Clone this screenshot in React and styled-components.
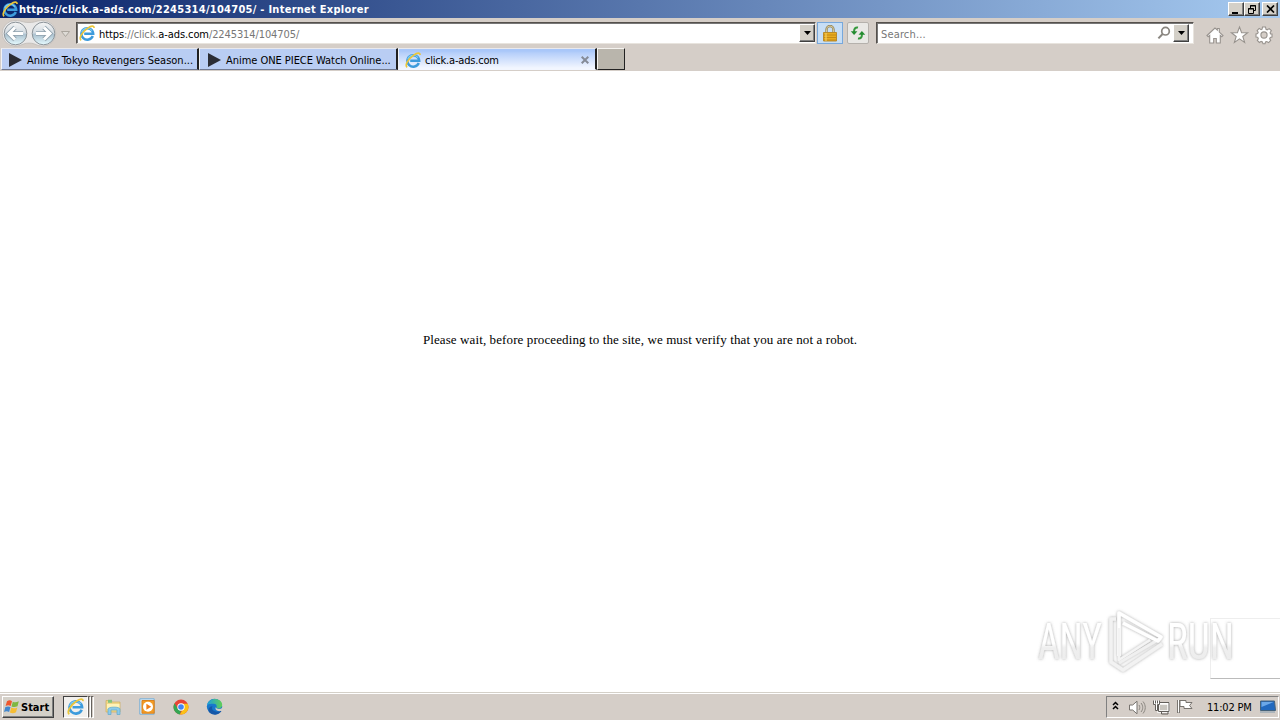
import React from "react";
import styled, { createGlobalStyle, css } from "styled-components";

const tabs = [
  { title: "Anime Tokyo Revengers Season...", spacing: "0" },
  { title: "Anime ONE PIECE Watch Online...", spacing: "-0.04px" },
  { title: "click.a-ads.com", active: true, spacing: "-0.2px" },
];

function IeIcon({ size = 16 }) {
  return (
    <svg width={size} height={size} viewBox="0 0 16 16" fill="none">
      <path
        d="M13.8 11A5.9 5.7 0 1 1 14.2 8.7H5.2"
        stroke="#3d9bdc"
        strokeWidth="2.5"
      />
      <path d="M2.6 7.4A5.9 5.7 0 0 1 13 5.6" stroke="#7fcdf3" strokeWidth="1.1" />
      <path
        d="M2.2 15.2C-.8 13.5 3.4 6.8 8.8 3.1c3.3-2.3 6.5-2.9 6.2-.1"
        stroke="#ecc638"
        strokeWidth="1.7"
      />
    </svg>
  );
}

function NavButtons() {
  return (
    <svg width="74" height="28" viewBox="0 0 74 28">
      <defs>
        <linearGradient id="nav" x2="0" y2="1">
          <stop stopColor="#f5f5f5" />
          <stop offset=".46" stopColor="#d3dbe2" />
          <stop offset=".55" stopColor="#acc2d0" />
          <stop offset="1" stopColor="#e6fbff" />
        </linearGradient>
      </defs>
      <path
        d="M15 1.5c7 0 7 2 14 2s7-2 14-2a12.8 12.8 0 0 1 0 25.6c-7 0-7-3-14-3s-7 3-14 3a12.8 12.8 0 0 1 0-25.6Z"
        fill="#e9e8e8"
        stroke="#bbb7b3"
        strokeWidth=".7"
      />
      {[15.5, 43.5].map((x) => (
        <circle key={x} cx={x} cy="14.5" r="11.3" fill="url(#nav)" stroke="#8b9399" />
      ))}
      <g fill="none" strokeLinejoin="miter" transform="translate(0 -.5)">
        <g stroke="#8fa1ad" strokeWidth="4.6">
          <path d="m15 9-6 6 6 6M10 15h13" />
          <path d="m44 9 6 6-6 6M49 15H36" />
        </g>
        <g stroke="#fff" strokeWidth="3">
          <path d="m15 9-6 6 6 6M10 15h13" />
          <path d="m44 9 6 6-6 6M49 15H36" />
        </g>
      </g>
      <path d="M61.5 12.5h8l-4 5Z" fill="#dedbd6" stroke="#aaa59d" />
    </svg>
  );
}

function DownArrow() {
  return (
    <svg width="7" height="4" viewBox="0 0 7 4">
      <path d="M0 0h7L3.5 4Z" fill="#000" />
    </svg>
  );
}

function LockIcon() {
  return (
    <svg width="14" height="17" viewBox="0 0 14 17">
      <path d="M3.5 8V4.5a3.5 3.5 0 0 1 7 0V8" fill="none" stroke="#8f8055" strokeWidth="2.3" />
      <path d="M3.5 8V4.5a3.5 3.5 0 0 1 7 0V8" fill="none" stroke="#e8dcaa" strokeWidth=".8" />
      <path d="M.5 7.5h13v8.5H.5z" fill="#e8ad20" stroke="#b98b2c" />
      <path d="M1 10h12M1 12.5h12M1 15h12" stroke="#bc8212" strokeWidth=".8" />
      <path d="M3 8v8" stroke="#f8d66c" />
    </svg>
  );
}

function RefreshIcon() {
  return (
    <svg width="16" height="16" viewBox="0 0 16 16" fill="none">
      <path d="M8 2.5C5.5 2 4 3.4 4 7M8 13.5c2.5.5 4-.9 4-4.5" stroke="#35993c" strokeWidth="2" />
      <path d="M.8 6.2h6.6L4.1 10Z" fill="#238b30" />
      <path d="M8.6 9.8h6.6L11.9 6Z" fill="#238b30" />
    </svg>
  );
}

function SearchIcon() {
  return (
    <svg width="14" height="14" viewBox="0 0 14 14" fill="none" stroke="#89857f">
      <circle cx="8.5" cy="5.2" r="3.8" strokeWidth="1.7" />
      <path d="m5.6 8-4.2 4.4" strokeWidth="2" />
    </svg>
  );
}

function CommandIcons() {
  return (
    <svg width="68" height="20" viewBox="0 0 68 20" fill="#fff" stroke="#97928d" strokeWidth="1.1">
      <path d="M2 10.5 10 3l2.3 2.1V3.5h2v3.6l3.7 3.4-1.2 1.2-1.5-1.3V18h-4v-4.5H8.7V18h-4v-7.6l-1.5 1.3Z" />
      <path d="m34.5 2 2.1 5.6 6 .2-4.8 3.7 1.8 5.9-5.1-3.5-5.1 3.5 1.8-5.9-4.8-3.7 6-.2Z" />
      <g transform="translate(59 10)">
        <path d="M-1.5-8h3l.5 2.3 1.2.5 2-1.2 2.1 2.1-1.2 2 .5 1.2L8-1v3l-1.7.4-.6 1.4 1 1.7-2.1 2.1-1.8-1.1-1.3.5-.5 1.7h-2l-.6-1.8-1.3-.5-1.7 1.1-2.1-2.1 1-1.7-.6-1.4L-8 2v-3l1.6-.4.6-1.3-1.1-1.8 2.1-2.1 1.9 1.2 1-.4Z" />
        <circle r="3.1" fill="#d5cec8" />
      </g>
    </svg>
  );
}

function WindowsIcon() {
  return (
    <svg width="17" height="16" viewBox="0 0 17 16">
      <path d="M3 2.2c2-1.2 3.7-1 5 0L6.7 7.1C5.1 6 3.5 6 1.6 7Z" fill="#ef572d" />
      <path d="M8.8 2.7c1.8.8 3.6.8 6-.4l-1.3 5c-2.3 1.1-4 1-6 .1Z" fill="#7fb742" />
      <path d="M1.4 8.1c2-1 3.5-.9 5.1 0l-1.4 5c-1.5-1-3.2-1.1-5.1 0Z" fill="#4287ce" />
      <path d="M7.3 8.6c1.9.9 3.7.9 6-.2L12 13.3c-2.4 1.2-4.2 1-6.1.1Z" fill="#f6bd34" />
    </svg>
  );
}

function FolderIcon() {
  return (
    <svg width="18" height="18" viewBox="0 0 18 18">
      <path d="M2 2.5h5l1 1.5h8V14H2Z" fill="#f0d888" stroke="#cfae5c" strokeWidth=".7" />
      <path d="M4 1.8h4v3H4z" fill="#86c27c" />
      <path d="M3 6h12.5v5H3z" fill="#fff3b8" />
      <path d="M4 16.5V11c0-2.5 12-2.5 12 0v5.5h-3V12H7v4.5Z" fill="#8ccbea" stroke="#5fa8cc" strokeWidth=".7" />
    </svg>
  );
}

function MediaIcon() {
  return (
    <svg width="17" height="17" viewBox="0 0 17 17">
      <path d="M.8.8h14.4v15.4H.8z" fill="#d5e8f6" stroke="#78aed6" />
      <path d="M3 2.5h12.2v12.7H3z" fill="#f49b23" stroke="#d98120" />
      <circle cx="9" cy="8.8" r="5" fill="#fff" />
      <path d="m7.4 5.8 4.8 3-4.8 3Z" fill="#ef7e19" />
    </svg>
  );
}

function ChromeIcon() {
  return (
    <svg width="16" height="16" viewBox="0 0 16 16">
      <circle cx="8" cy="8" r="7.5" fill="#e84435" />
      <path d="M1.5 4.2 5 10.1 8 11.2 6.8 15.4A7.5 7.5 0 0 1 1.5 4.2Z" fill="#34a653" />
      <path d="M8 4.7h6.7A7.5 7.5 0 0 1 6.8 15.4L10.7 9Z" fill="#fbc116" />
      <circle cx="8" cy="8" r="3.7" fill="#fff" />
      <circle cx="8" cy="8" r="2.8" fill="#4285f4" />
    </svg>
  );
}

function EdgeIcon() {
  return (
    <svg width="17" height="17" viewBox="0 0 17 17">
      <defs>
        <linearGradient id="edge" x1="0" x2="1">
          <stop stopColor="#1c9fdd" />
          <stop offset="1" stopColor="#62cf55" />
        </linearGradient>
      </defs>
      <circle cx="8.5" cy="8.5" r="7.7" fill="#1878cc" />
      <path d="M1 7.6C2-1.3 16.2-1 16.2 7.1c0 3.6-4.4 4.1-6 2.6 1.1-1.3.4-4-2.4-4C4.8 5.7 1.4 6 1 7.6Z" fill="url(#edge)" />
      <path d="M6.5 8.2C4.7 12 8.3 15 14.4 13.1c.6-.2 1.2 0 .7.7A8 8 0 0 1 4 15c-3.2-2.6-1-7 2.5-6.8Z" fill="#1558a8" />
      <path d="M9.6 9.3c1.3 2.1 4.2 2 6.7.7-.1 1.2-.4 2-1 2.8-3.1 1.1-6.5-.3-5.7-3.5Z" fill="#d5cec8" />
    </svg>
  );
}

function TrayIcons() {
  return (
    <svg width="84" height="20" viewBox="0 0 84 20" fill="none">
      <path d="m3 8 2.5-2.5L8 8M3 12 5.5 9.5 8 12" stroke="#000" strokeWidth="1.5" />
      <path d="M19.5 8h3.2L27 4.2v12.6L22.7 13h-3.2Z" fill="#fff" stroke="#77736e" />
      <path d="M29 8c1 1.5 1 3.5 0 5m2-7c2.3 2.7 2.3 6.3 0 9m2-10.5c3 3.8 3 8.2 0 12" stroke="#8c8882" />
      <path d="M48.5 6.5h10v8h-10Z" fill="#c8c5bf" stroke="#fff" strokeWidth="2.4" />
      <path d="M48.5 5.5H59v9H48.5Zm3 9v2.5H58v-2.5" stroke="#625f5b" />
      <path d="M43.5 3.5v4h2v6h2v-6h2v-4m-4 0v3m2-3v3" fill="#fff" stroke="#625f5b" />
      <path d="M68.5 3v13" stroke="#706c67" strokeWidth="2.8" />
      <path d="M68.5 3v12.5" stroke="#fff" strokeWidth="1" />
      <path d="M70 3.5h6v2h6l-2.4 3 2.4 3h-8v-2h-4Z" fill="#fff" stroke="#77736e" />
    </svg>
  );
}

function DesktopIcon() {
  return (
    <svg width="18" height="15" viewBox="0 0 18 15">
      <path d="M1.5 2h14l1 9.5H1.5Z" fill="#2269be" stroke="#45627b" />
      <path d="M2.5 3h12l-12 5Z" fill="#6ba8e8" />
      <path d="M1 13h15" stroke="#8fa3b3" strokeWidth="1.2" />
    </svg>
  );
}

function Watermark() {
  return (
    <svg width="204" height="70" viewBox="0 0 204 70">
      <defs>
        <linearGradient id="fade" x2="0" y2="1">
          <stop stopColor="#fff" />
          <stop offset=".52" stopColor="#fff" />
          <stop offset=".6" stopColor="#efefef" />
          <stop offset="1" stopColor="#ebebeb" />
        </linearGradient>
        <filter id="shade" x="-10%" y="-10%" width="120%" height="120%">
          <feDropShadow dx="0" dy="0" stdDeviation="1.5" floodColor="#777" floodOpacity=".65" />
        </filter>
      </defs>
      <g filter="url(#shade)">
        <g fill="url(#fade)" fontFamily="Roboto, sans-serif" fontSize="50">
          <text x="5" y="53" textLength="64" lengthAdjust="spacingAndGlyphs">
            ANY
          </text>
          <text x="134" y="53" textLength="67" lengthAdjust="spacingAndGlyphs">
            RUN
          </text>
        </g>
        <g fill="none" strokeWidth="3.6" strokeLinejoin="round">
          <path d="M83 13h-5v43l12 8 39-26" stroke="#f2f2f2" />
          <path d="m86 57 42-25" stroke="#f0f0f0" strokeWidth="3" />
          <path d="M86 50V7l42 24-3 4-35-18" stroke="#fff" />
          <path d="M86 22v32l31-20" stroke="#f4f4f4" strokeWidth="2.6" />
        </g>
      </g>
    </svg>
  );
}

function App() {
  return (
    <>
      <GlobalStyle />
      <Screen>
        <TitleBar>
          <IeIcon />
          <Title>https://click.a-ads.com/2245314/104705/ - Internet Explorer</Title>
          <WindowButton>
            <svg width="10" height="9" viewBox="0 0 10 9">
              <path d="M1 7h6v2H1z" />
            </svg>
          </WindowButton>
          <WindowButton>
            <svg width="10" height="9" viewBox="0 0 10 9" fill="none" stroke="#000">
              <path d="M3.5 3V.5h5v5H7M3 1h6M1.5 3.5h5v5h-5ZM1 4h6" />
            </svg>
          </WindowButton>
          <WindowButton $gap>
            <svg width="9" height="8" viewBox="0 0 9 8" stroke="#000" strokeWidth="1.7">
              <path d="m1 .5 7 7m0-7-7 7" />
            </svg>
          </WindowButton>
        </TitleBar>

        <Toolbar>
          <NavButtons />
          <AddressBar>
            <IeIcon />
            <Address>
              <b>https</b>://click.<b>a-ads.com</b>/2245314/104705/
            </Address>
            <DropButton>
              <DownArrow />
            </DropButton>
          </AddressBar>
          <ToolButton $active>
            <LockIcon />
          </ToolButton>
          <ToolButton>
            <RefreshIcon />
          </ToolButton>
          <SearchBar>
            <Placeholder>Search...</Placeholder>
            <SearchIcon />
            <DropButton>
              <DownArrow />
            </DropButton>
          </SearchBar>
          <Commands>
            <CommandIcons />
          </Commands>
        </Toolbar>

        <TabRow>
          {tabs.map((tab) => (
            <Tab key={tab.title} $active={tab.active}>
              {tab.active ? (
                <IeIcon />
              ) : (
                <svg width="16" height="16" viewBox="0 0 16 16">
                  <path d="M2 1v14l13-7Z" fill="#2b2d35" />
                </svg>
              )}
              <TabTitle $spacing={tab.spacing}>{tab.title}</TabTitle>
              {tab.active && (
                <svg width="8" height="8" viewBox="0 0 8 8" stroke="#858b97" strokeWidth="2">
                  <path d="m.7.7 6.6 6.6m0-6.6L.7 7.3" />
                </svg>
              )}
            </Tab>
          ))}
          <NewTab />
        </TabRow>

        <Page>
          <Message>
            Please wait, before proceeding to the site, we must verify that you are not a robot.
          </Message>
          <Captcha />
          <WatermarkLayer>
            <Watermark />
          </WatermarkLayer>
        </Page>

        <Taskbar>
          <StartButton>
            <WindowsIcon />
            <span>Start</span>
          </StartButton>
          <RunningApp>
            <IeIcon size={17} />
          </RunningApp>
          <Stack />
          <Stack />
          <QuickLaunch>
            <FolderIcon />
            <MediaIcon />
            <ChromeIcon />
            <EdgeIcon />
          </QuickLaunch>
          <Tray>
            <TrayIcons />
            <Clock>11:02 PM</Clock>
            <DesktopIcon />
          </Tray>
        </Taskbar>
      </Screen>
    </>
  );
}

export default App;

const GlobalStyle = createGlobalStyle`
  * {
    box-sizing: border-box;
  }
  body {
    margin: 0;
    overflow: hidden;
  }
  svg {
    display: block;
    flex-shrink: 0;
  }
`;

const raised = css`
  background: #d4d0c8;
  border: 1px solid;
  border-color: #fff #404040 #404040 #fff;
  box-shadow: inset -1px -1px #808080;
`;

const Screen = styled.div`
  display: flex;
  flex-direction: column;
  width: 1280px;
  height: 720px;
  overflow: hidden;
  background: #fff;
  color: #000;
  font-family: "DejaVu Sans Condensed", "DejaVu Sans", sans-serif;
  font-stretch: condensed;
  font-size: 11px;
  white-space: nowrap;
`;

const TitleBar = styled.header`
  display: flex;
  align-items: center;
  height: 18px;
  padding: 0 2px;
  background: linear-gradient(90deg, #0a246a, #a6caf0);
`;

const Title = styled.div`
  flex: 1;
  margin-left: 1px;
  color: #fff;
  font-weight: 700;
  letter-spacing: 0.27px;
`;

const WindowButton = styled.div`
  ${raised}
  display: flex;
  align-items: center;
  justify-content: center;
  width: 16px;
  height: 14px;
  margin-left: ${(props) => (props.$gap ? "2px" : "0")};
`;

const Toolbar = styled.div`
  display: flex;
  align-items: center;
  height: 30px;
  background: #d5cec8;
`;

const Field = styled.div`
  display: flex;
  align-items: center;
  height: 22px;
  background: #fff;
  border: 1px solid;
  border-color: #55504c #e8e4de #e8e4de #55504c;
  box-shadow: inset 1px 1px #777;
`;

const AddressBar = styled(Field)`
  width: 740px;
  margin-left: 2px;
  padding-left: 2px;
`;

const Address = styled.div`
  flex: 1;
  margin-left: 4px;
  padding-top: 2px;
  color: #777;
  letter-spacing: -0.1px;

  b {
    color: #000;
    font-weight: 400;
  }
`;

const DropButton = styled.div`
  ${raised}
  display: flex;
  align-items: center;
  justify-content: center;
  width: 16px;
  height: 18px;
`;

const ToolButton = styled.div`
  display: flex;
  align-items: center;
  justify-content: center;
  width: ${(props) => (props.$active ? "26px" : "22px")};
  height: 22px;
  margin-left: ${(props) => (props.$active ? "1px" : "4px")};
  background: ${(props) => (props.$active ? "#c7def5" : "#e9e8e5")};
  border: 1px solid ${(props) => (props.$active ? "#77a8dc" : "#b5b1ac")};
  border-radius: ${(props) => (props.$active ? "0" : "2px")};
`;

const SearchBar = styled(Field)`
  width: 318px;
  margin-left: 7px;
  padding: 0 4px;

  > svg {
    margin-right: 2px;
  }
`;

const Placeholder = styled.div`
  flex: 1;
  padding-top: 2px;
  color: #777;
  letter-spacing: 0.15px;
`;

const Commands = styled.div`
  margin-left: 11px;
  padding-top: 3px;
`;

const TabRow = styled.div`
  display: flex;
  height: 23px;
  background: #d5cec8;
  padding-left: 1px;
`;

const Tab = styled.div`
  display: flex;
  align-items: center;
  width: 199px;
  height: 22px;
  padding: 1px 6px 0 6px;
  background: ${(props) =>
    props.$active
      ? "linear-gradient(#a9c7f9 0 2px, #b6cffa 4px, #f2f6ff 19px)"
      : "#b9cdf3"};
  border: 1px solid;
  border-color: #e9e9ed #202020 ${(props) => (props.$active ? "#f2f6ff" : "#707990")} #f2f3f5;
  border-right-width: 2px;

  &:first-child {
    width: 198px;
    padding-left: 5px;
  }
`;

const TabTitle = styled.div`
  flex: 1;
  margin-left: 4px;
  padding-top: 1px;
  letter-spacing: ${(props) => props.$spacing};
`;

const NewTab = styled.div`
  width: 28px;
  height: 22px;
  background: #b9b5ac;
  border: 1px solid;
  border-color: #f5f3ef #222 #222 #f5f3ef;
`;

const Page = styled.main`
  position: relative;
  display: flex;
  flex: 1;
  align-items: center;
  justify-content: center;
  background: #fff;
`;

const Message = styled.p`
  margin: 0 0 83px;
  font-family: "Liberation Serif", "Times New Roman", serif;
  font-stretch: normal;
  font-size: 13px;
  letter-spacing: 0.107px;
`;

const Captcha = styled.div`
  position: absolute;
  right: 0;
  bottom: 13px;
  width: 70px;
  height: 61px;
  border: 1px solid #eee;
  border-right: 0;
  border-bottom-color: #bbb;
`;

const WatermarkLayer = styled.div`
  position: absolute;
  right: 43px;
  bottom: 16px;
`;

const Taskbar = styled.footer`
  display: flex;
  align-items: center;
  height: 28px;
  background: #d5cec8;
  border-top: 1px solid #d4d0c8;
  box-shadow: inset 0 1px #fff;
`;

const StartButton = styled.div`
  ${raised}
  display: flex;
  align-items: center;
  width: 52px;
  height: 22px;
  margin-left: 2px;
  padding-left: 1px;
  font-weight: 700;

  span {
    padding-top: 1px;
  }
`;

const RunningApp = styled.div`
  display: flex;
  align-items: center;
  justify-content: center;
  width: 25px;
  height: 22px;
  margin-left: 9px;
  background: #f2f0ed;
  border: 1px solid;
  border-color: #404040 #fff #fff #404040;
`;

const Stack = styled.div`
  width: 3px;
  height: 22px;
  border: 1px solid;
  border-color: #66625e #fff #fff #66625e;
`;

const QuickLaunch = styled.div`
  display: flex;
  align-items: center;
  gap: 17px;
  margin-left: 10px;
`;

const Tray = styled.div`
  display: flex;
  align-items: center;
  width: 173px;
  height: 22px;
  margin-left: auto;
  margin-right: 1px;
  padding: 0 1px 0 3px;
  border: 1px solid;
  border-color: #808080 #fff #fff #808080;
`;

const Clock = styled.div`
  flex: 1;
  margin-left: 13px;
  padding-top: 1px;
  letter-spacing: -0.2px;
`;
